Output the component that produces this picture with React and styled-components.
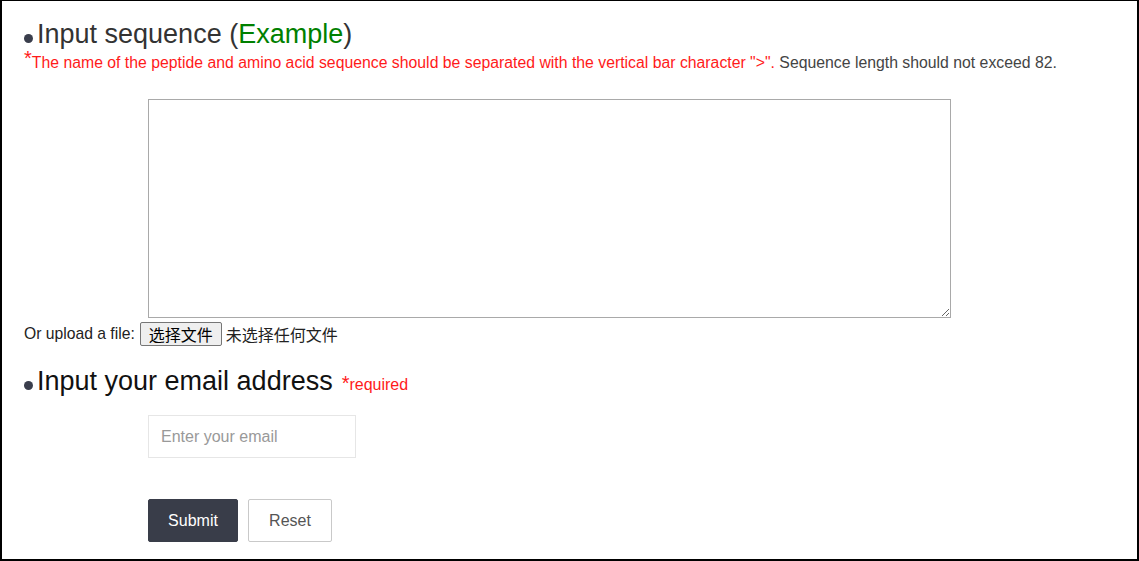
import React, { useState } from 'react';
import styled, { createGlobalStyle } from 'styled-components';

const GlobalStyle = createGlobalStyle`
  html, body {
    margin: 0;
    padding: 0;
    background: #fff;
  }
  body {
    font-family: "Liberation Sans", Arial, "Noto Sans CJK SC", sans-serif;
  }
`;

const Frame = styled.div`
  box-sizing: border-box;
  width: 1139px;
  height: 561px;
  border: 2px solid #000;
  border-top-width: 1px;
  padding: 18px 22px 0 20px;
  overflow: hidden;
`;

const Heading = styled.h3`
  margin: 0;
  font-weight: normal;
  font-size: 27px;
  line-height: 31px;
  color: ${(p) => p.$dark ? '#111' : '#333'};
  display: flex;
  align-items: baseline;
`;

const Bullet = styled.span`
  display: inline-block;
  width: 9px;
  height: 9px;
  border-radius: 50%;
  background: #3a3e4c;
  margin: 0 4px 0 2px;
`;

const Green = styled.span`
  color: #008000;
`;

const Star = styled.span`
  color: #ff1a1a;
  font-size: 20px;
  position: relative;
  top: ${(p) => p.$top || '-3px'};
`;

const Required = styled.span`
  font-size: 16px;
  color: #ff1a1a;
  margin-left: 9px;
`;

const Note = styled.p`
  margin: 0 0 0 2px;
  font-size: 15.8px;
  line-height: 22px;
  color: #ff1a1a;
`;

const Grey = styled.span`
  color: #444;
`;

const Indent = styled.div`
  padding-left: 126px;
`;

const SeqArea = styled.textarea`
  box-sizing: border-box;
  display: block;
  width: 803px;
  height: 219px;
  margin: 25px 0 0 0;
  border: 1px solid #a9a9a9;
  font-family: inherit;
  font-size: 15px;
  outline: none;
`;

const UploadRow = styled.div`
  display: flex;
  align-items: center;
  margin: 3px 0 0 2px;
  height: 26px;
  font-size: 15.7px;
  color: #222;
`;

const FileButton = styled.label`
  box-sizing: border-box;
  display: inline-flex;
  align-items: center;
  justify-content: center;
  width: 82px;
  height: 24px;
  margin-left: 5px;
  background: #efefef;
  border: 1px solid #767676;
  border-radius: 2px;
  font-family: "Noto Sans CJK SC", sans-serif;
  font-size: 16px;
  color: #000;
  cursor: pointer;
  input {
    display: none;
  }
`;

const FileName = styled.span`
  margin-left: 4px;
  font-family: "Noto Sans CJK SC", sans-serif;
  font-size: 16px;
  color: #222;
`;

const SecondHeading = styled(Heading)`
  margin-top: 19px;
`;

const EmailInput = styled.input`
  box-sizing: border-box;
  display: block;
  width: 208px;
  height: 43px;
  margin-top: 15px;
  padding: 0 12px;
  border: 1px solid #e6e6e6;
  font-family: inherit;
  font-size: 16px;
  color: #333;
  outline: none;
  &::placeholder {
    color: #999;
  }
`;

const Buttons = styled.div`
  display: flex;
  gap: 10px;
  margin-top: 41px;
`;

const Button = styled.button`
  box-sizing: border-box;
  height: 43px;
  width: ${(p) => p.$primary ? '90px' : '84px'};
  border: 1px solid ${(p) => p.$primary ? '#393d49' : '#c9c9c9'};
  border-radius: 2px;
  background: ${(p) => p.$primary ? '#393d49' : '#fff'};
  color: ${(p) => p.$primary ? '#fff' : '#555'};
  font-family: inherit;
  font-size: 16px;
  cursor: pointer;
`;

function App() {
  const [seq, setSeq] = useState('');
  const [email, setEmail] = useState('');
  const [fileName, setFileName] = useState('');

  const handleReset = () => {
    setSeq('');
    setEmail('');
    setFileName('');
  };

  return (
    <>
      <GlobalStyle />
      <Frame>
        <form onSubmit={(e) => e.preventDefault()}>
          <Heading>
            <Bullet />Input sequence (<Green>Example</Green>)
          </Heading>
          <Note>
            <Star>*</Star>The name of the peptide and amino acid sequence should be separated with the vertical bar character "&gt;".<Grey> Sequence length should not exceed 82.</Grey>
          </Note>
          <Indent>
            <SeqArea value={seq} onChange={(e) => setSeq(e.target.value)} />
          </Indent>
          <UploadRow>
            Or upload a file:
            <FileButton>
              选择文件
              <input type="file" onChange={(e) => setFileName(e.target.files[0] ? e.target.files[0].name : '')} />
            </FileButton>
            <FileName>{fileName || '未选择任何文件'}</FileName>
          </UploadRow>
          <SecondHeading $dark>
            <Bullet />Input your email address<Required><Star $top="0px">*</Star>required</Required>
          </SecondHeading>
          <Indent>
            <EmailInput
              type="email"
              placeholder="Enter your email"
              value={email}
              onChange={(e) => setEmail(e.target.value)}
            />
            <Buttons>
              <Button $primary type="submit">Submit</Button>
              <Button type="button" onClick={handleReset}>Reset</Button>
            </Buttons>
          </Indent>
        </form>
      </Frame>
    </>
  );
}

export default App;
